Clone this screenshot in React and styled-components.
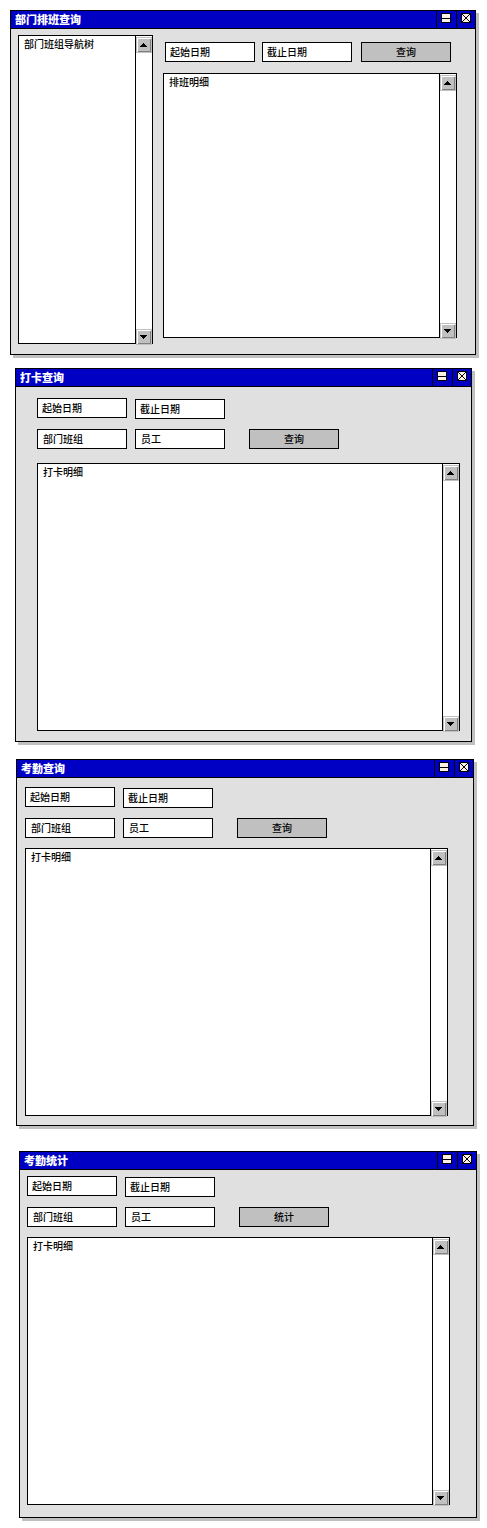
import React from 'react';
import styled, { createGlobalStyle } from 'styled-components';

const GlobalStyle = createGlobalStyle`
  *, *::before, *::after { box-sizing: border-box; }
  body {
    margin: 0;
    background: #fff;
    color: #000;
    font: 500 10px/12px "Noto Sans CJK SC", sans-serif;
  }
`;

const Page = styled.main`
  display: flex;
  flex-direction: column;
  align-items: flex-start;
  width: 487px;
  height: 1528px;
  padding-top: 10px;
`;

const Frame = styled.section`
  display: flex;
  flex-direction: column;
  flex: none;
  width: ${(p) => p.$width}px;
  height: ${(p) => p.$height}px;
  margin: 0 0 ${(p) => p.$after || 0}px ${(p) => p.$left}px;
  border: 1px solid #000;
  background: #e0e0e0;
  box-shadow: 3px 3px 0 #c0c0c0;
`;

const TitleBar = styled.header`
  display: flex;
  flex: none;
  height: 18px;
  border-bottom: 1px solid #000;
  background: #0000c4;
`;

const Title = styled.h1`
  flex: 1;
  margin: 0;
  padding: 2px 0 0 4px;
  color: #fff;
  font-size: 11px;
  font-weight: 900;
  line-height: 13px;
  white-space: nowrap;
`;

const TitleButton = styled.button`
  display: flex;
  align-items: flex-start;
  width: ${(p) => p.$width}px;
  height: 17px;
  padding: 2px 0 0 4px;
  border: 0;
  border-left: 1px solid #000;
  background: none;
`;

const Body = styled.div`
  display: flex;
  flex-direction: ${(p) => (p.$split ? 'row' : 'column')};
  align-items: flex-start;
  gap: ${(p) => (p.$split ? 10 : 0)}px;
  padding: ${(p) => p.$top}px 0 0 ${(p) => p.$left}px;
`;

const Column = styled.div`
  display: flex;
  flex-direction: column;
  padding-top: 7px;
`;

const Row = styled.div`
  display: flex;
  align-items: flex-start;
  gap: ${(p) => p.$gap}px;
  margin-bottom: ${(p) => p.$after}px;
  padding-left: ${(p) => p.$indent || 0}px;
`;

const Field = styled.div`
  width: 90px;
  height: 20px;
  margin-top: ${(p) => p.$drop || 0}px;
  padding: 3px 0 0 ${(p) => p.$inset || 4}px;
  border: 1px solid #000;
  background: #fff;
  white-space: nowrap;
`;

const ActionButton = styled.button`
  width: 90px;
  height: 20px;
  margin-left: ${(p) => p.$push || 0}px;
  padding: 0 0 1px;
  border: 1px solid #000;
  border-radius: 0;
  background: #c0c0c0;
  color: #000;
  font: inherit;
`;

const ListFrame = styled.div`
  display: flex;
  width: ${(p) => p.$width}px;
  height: ${(p) => p.$height}px;
  border: 1px solid #000;
  background: #fff;
`;

const ListText = styled.div`
  flex: 1;
  padding: 2px 0 0 5px;
  border-right: 1px solid #000;
  white-space: nowrap;
`;

const ScrollTrack = styled.div`
  display: flex;
  flex-direction: column;
  justify-content: space-between;
  width: 16px;
  margin-bottom: -2px;
  padding-top: 1px;
`;

const ScrollButton = styled.div`
  width: 16px;
  height: 16px;
  border: 1px solid #c0c0c0;
  background: #c0c0c0;
  box-shadow: inset 1px 1px 0 #fff, inset -1px -1px 0 #808080;

  svg { display: block; }
`;

const Arrow = ({ down }) => (
  <svg width="14" height="14" viewBox="0 0 14 14" shapeRendering="crispEdges">
    <path d={down ? 'M3 5h7v1H3zM4 6h5v1H4zM5 7h3v1H5zM6 8h1v1H6z' : 'M6 5h1v1H6zM5 6h3v1H5zM4 7h5v1H4zM3 8h7v1H3z'} />
  </svg>
);

const MinimizeIcon = () => (
  <svg width="10" height="10" viewBox="0 0 10 10" shapeRendering="crispEdges">
    <path d="M0 0h10v10H0z" />
    <path d="M1 1h8v4H1zM1 6h8v3H1z" fill="#fff0e4" />
  </svg>
);

const diagonal = [1, 2, 3, 4, 5, 6, 7, 8];

const CloseIcon = () => (
  <svg width="10" height="10" viewBox="0 0 10 10" shapeRendering="crispEdges">
    <path d="M0 0h10v10H0z" />
    <path d="M1 1h8v8H1z" fill="#fff0e4" />
    {diagonal.map((n) => (
      <path key={n} d={`M${n} ${n}h1v1h-1zM${9 - n} ${n}h1v1h-1z`} />
    ))}
  </svg>
);

function Window({ title, children, ...frame }) {
  return (
    <Frame {...frame}>
      <TitleBar>
        <Title>{title}</Title>
        <TitleButton $width={20} aria-label="最小化"><MinimizeIcon /></TitleButton>
        <TitleButton $width={19} aria-label="关闭"><CloseIcon /></TitleButton>
      </TitleBar>
      {children}
    </Frame>
  );
}

function List({ text, width, height }) {
  return (
    <ListFrame $width={width} $height={height}>
      <ListText>{text}</ListText>
      <ScrollTrack>
        <ScrollButton><Arrow /></ScrollButton>
        <ScrollButton><Arrow down /></ScrollButton>
      </ScrollTrack>
    </ListFrame>
  );
}

function QueryForm({ top, left, action, gap }) {
  return (
    <Body $top={top} $left={left}>
      <Row $gap={8} $after={10}>
        <Field>起始日期</Field>
        <Field $drop={1}>截止日期</Field>
      </Row>
      <Row $gap={8} $after={gap}>
        <Field $inset={5}>部门班组</Field>
        <Field $inset={5}>员工</Field>
        <ActionButton $push={16}>{action}</ActionButton>
      </Row>
      <List text="打卡明细" width={423} height={268} />
    </Body>
  );
}

export default function App() {
  return (
    <>
      <GlobalStyle />
      <Page>
        <Window title="部门排班查询" $left={10} $width={466} $height={345} $after={13}>
          <Body $split $top={6} $left={7}>
            <List text="部门班组导航树" width={135} height={309} />
            <Column>
              <Row $gap={7} $after={11} $indent={2}>
                <Field>起始日期</Field>
                <Field>截止日期</Field>
                <ActionButton $push={2}>查询</ActionButton>
              </Row>
              <List text="排班明细" width={294} height={265} />
            </Column>
          </Body>
        </Window>
        <Window title="打卡查询" $left={15} $width={457} $height={374} $after={17}>
          <QueryForm top={11} left={21} action="查询" gap={14} />
        </Window>
        <Window title="考勤查询" $left={16} $width={458} $height={367} $after={25}>
          <QueryForm top={9} left={8} action="查询" gap={10} />
        </Window>
        <Window title="考勤统计" $left={19} $width={458} $height={367}>
          <QueryForm top={6} left={7} action="统计" gap={10} />
        </Window>
      </Page>
    </>
  );
}
